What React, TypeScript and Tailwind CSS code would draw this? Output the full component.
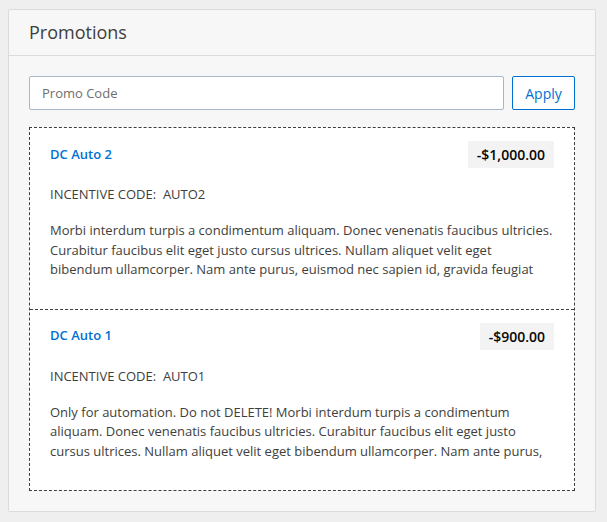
const promos = [
  {
    name: "DC Auto 2",
    amount: "-$1,000.00",
    code: "AUTO2",
    description:
      "Morbi interdum turpis a condimentum aliquam. Donec venenatis faucibus ultricies. Curabitur faucibus elit eget justo cursus ultrices. Nullam aliquet velit eget bibendum ullamcorper. Nam ante purus, euismod nec sapien id, gravida feugiat",
  },
  {
    name: "DC Auto 1",
    amount: "-$900.00",
    code: "AUTO1",
    description:
      "Only for automation. Do not DELETE! Morbi interdum turpis a condimentum aliquam. Donec venenatis faucibus ultricies. Curabitur faucibus elit eget justo cursus ultrices. Nullam aliquet velit eget bibendum ullamcorper. Nam ante purus,",
  },
];

export default function App() {
  return (
    <div className="min-h-screen bg-[#efefef] pt-[9px] pl-2 font-['Open_Sans',sans-serif] text-[#3e3e3c]">
      <div className="w-[588px] border border-[#dddbda] bg-[#f7f7f7] rounded-[2px]">
        <div className="h-[46px] flex items-center px-5 border-b border-[#dddbda]">
          <h2 className="text-[18px] font-normal text-[#3e3e3c]">Promotions</h2>
        </div>

        <div className="px-5 pt-5 pb-5">
          <div className="flex gap-[8px]">
            <input
              type="text"
              placeholder="Promo Code"
              className="flex-1 h-[34px] bg-white border border-[#a8b7c7] rounded-[2px] px-3 text-[13px] text-[#3e3e3c] placeholder:text-[#706e6b] outline-none"
            />
            <button className="w-[63px] h-[34px] bg-white border border-[#0070d2] rounded-[2px] text-[14px] text-[#0070d2]">
              Apply
            </button>
          </div>

          <div className="mt-[17px] border border-dashed border-[#3e3e3c] bg-white">
            {promos.map((p, i) => (
              <div
                key={p.code}
                className={
                  "px-5 pt-[13px] pb-[29px] " +
                  (i > 0 ? "border-t border-dashed border-[#3e3e3c]" : "")
                }
              >
                <div className="flex items-center justify-between">
                  <a href="#" className="text-[13px] font-semibold text-[#0070d2]">
                    {p.name}
                  </a>
                  <span className="h-[27px] px-[9px] flex items-center bg-[#f3f3f3] text-[14px] font-semibold text-[#080707]">
                    {p.amount}
                  </span>
                </div>
                <p className="mt-4 text-[13px] leading-5">
                  INCENTIVE CODE:&nbsp; {p.code}
                </p>
                <p className="mt-[17px] text-[13px] leading-[19.5px]">{p.description}</p>
              </div>
            ))}
          </div>
        </div>
      </div>
    </div>
  );
}
